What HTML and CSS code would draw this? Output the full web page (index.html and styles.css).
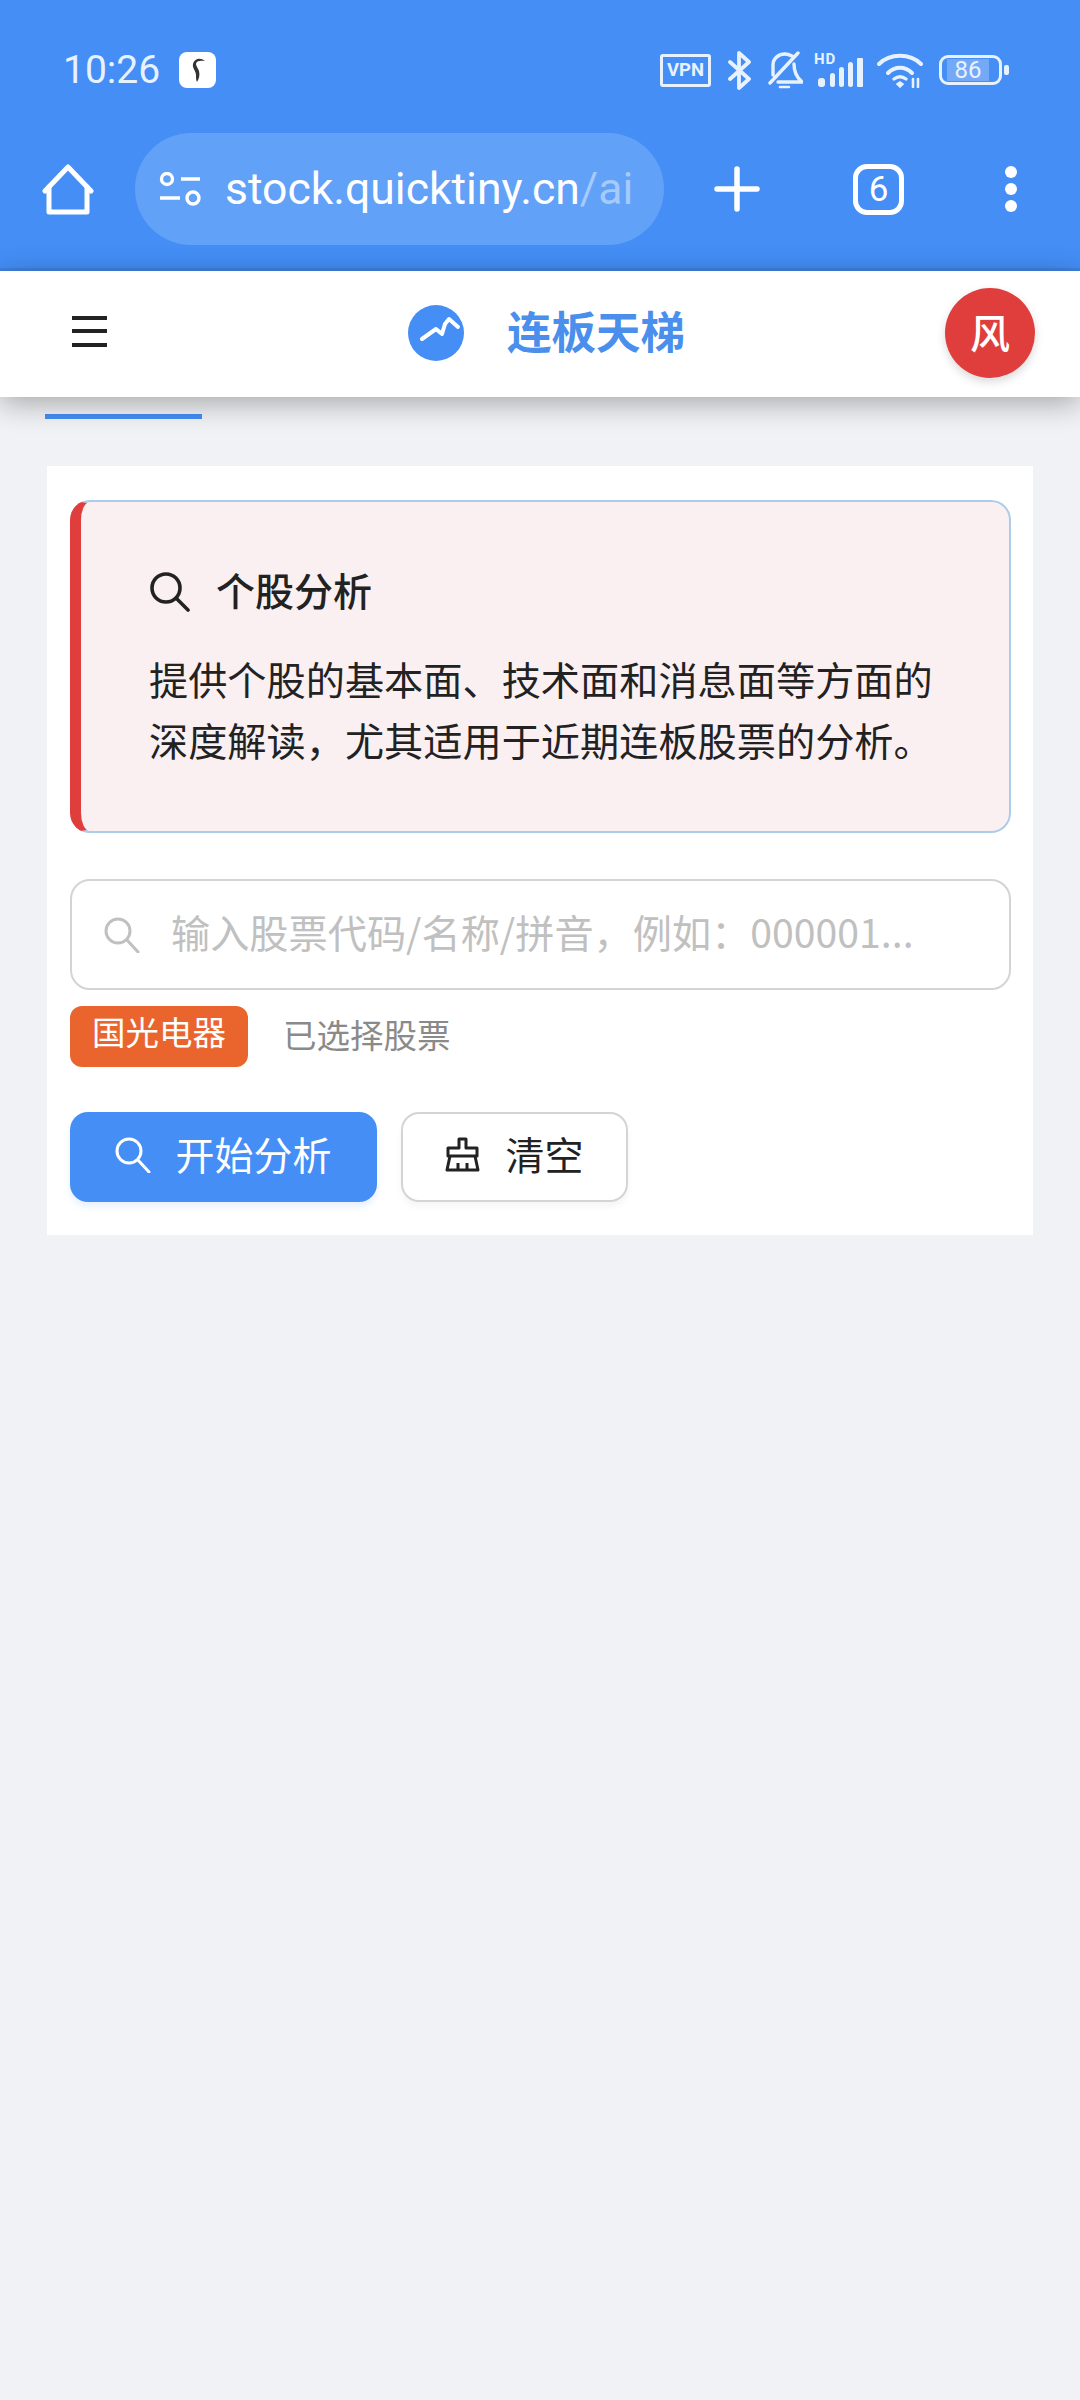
FILE: index.html
```html
<!DOCTYPE html>
<html lang="zh-CN">
<head>
    <meta charset="UTF-8">
    <meta name="viewport" content="width=device-width, initial-scale=1.0">
    <title>连板天梯</title>
    <link rel="stylesheet" href="styles.css">
</head>
<body>

    <div class="browser-top">
        <div class="status-bar">
            <div class="status-left">
                <span class="clock">10:26</span>
                <span class="app-badge">
                    <svg width="16" height="26" viewBox="0 0 16 26"><path d="M15 4C10 0 4 2 3 7c-1 4 3 7 3 11 0 3 0 5 1 7 2-3 3-7 2-11C8 11 6 9 6 7c0-3 4-4 9-3z" fill="#333"/></svg>
                </span>
            </div>
            <div class="status-right">
                <span class="vpn-tag">VPN</span>
                <svg class="st-bt" width="25" height="39" viewBox="0 0 25 39" fill="none" stroke="#e8f2ff" stroke-width="3.8" stroke-linecap="round" stroke-linejoin="round"><path d="M3 11l19 17-10 9V2l10 9L3 28"/></svg>
                <svg class="st-bell" width="36" height="38" viewBox="0 0 36 38" fill="none" stroke="#e8f2ff" stroke-width="3.4" stroke-linecap="round" stroke-linejoin="round"><path d="M31 2L3 32M6 24V14C6 7 12 3 18 3c3 0 5 1 7 2M27 13c0 6 1 12 8 18H11"/><path d="M13 36h9" stroke-width="2.6"/></svg>
                <span class="signal">
                    <span class="hd">HD</span>
                    <svg width="46" height="31" viewBox="0 0 46 31" fill="#e8f2ff"><rect x="0" y="22" width="7" height="9" rx="3"/><rect x="12" y="17" width="5" height="14" rx="2.5"/><rect x="21" y="11" width="5" height="20" rx="2.5"/><rect x="30" y="6" width="5" height="25" rx="2.5"/><rect x="39" y="2" width="6" height="29" rx="1"/></svg>
                </span>
                <svg class="st-wifi" width="46" height="35" viewBox="0 0 46 35" fill="none" stroke="#e8f2ff" stroke-width="4" stroke-linecap="round"><path d="M2 11C13 0 33 0 44 11"/><path d="M11 20c7-7 17-7 24 0"/><path d="M17 26c4-3 8-3 12 0" stroke-width="3.4"/><path d="M20 31l3-2 3 2-3 3z" fill="#e8f2ff" stroke-width="1.6"/><path d="M36 26v8M41 26v8" stroke-width="2.6"/></svg>
                <span class="battery">
                    <span class="battery-body"><span class="battery-level">86</span></span>
                    <span class="battery-tip"></span>
                </span>
            </div>
        </div>

        <div class="toolbar">
            <svg class="home-icon" width="52" height="51" viewBox="0 0 52 51" fill="none" stroke="#fff" stroke-width="5" stroke-linecap="round" stroke-linejoin="round"><path d="M3 27L26 3l23 24"/><path d="M7 23v25h38V23"/></svg>
            <div class="url-bar">
                <svg width="42" height="35" viewBox="0 0 42 35" fill="none" stroke="#fff" stroke-width="3.4"><circle cx="8" cy="7" r="5.5"/><path d="M22 7h19M1 26h20"/><circle cx="34" cy="26" r="6"/></svg>
                <span class="url-text">stock.quicktiny.cn<span class="url-path">/ai</span></span>
            </div>
            <svg class="plus-icon" width="46" height="46" viewBox="0 0 46 46" stroke="#fff" stroke-width="5.5" stroke-linecap="round"><path d="M23 3v40M3 23h40"/></svg>
            <span class="tab-count">6</span>
            <span class="more-dots"><i></i><i></i><i></i></span>
        </div>
    </div>

    <header class="app-header">
        <svg class="menu-icon" width="35" height="31" viewBox="0 0 35 31" fill="#222"><rect y="0" width="35" height="4"/><rect y="13" width="35" height="4"/><rect y="27" width="35" height="4"/></svg>
        <div class="brand">
            <span class="brand-logo">
                <svg width="56" height="56" viewBox="0 0 56 56" fill="none" stroke="#fff" stroke-width="4" stroke-linecap="round" stroke-linejoin="round"><path d="M14 34l14-10 6 5 3-10 4-5 9 8"/></svg>
            </span>
            <span class="brand-name">连板天梯</span>
        </div>
        <span class="avatar">风</span>
    </header>

    <div class="tab-line"></div>

    <main class="panel">
        <section class="intro-card">
            <h2 class="intro-title">
                <svg width="40" height="40" viewBox="0 0 40 40" fill="none" stroke="#222" stroke-width="3.6" stroke-linecap="round"><circle cx="16" cy="16" r="14"/><path d="M26 26l12 12"/></svg>
                <span class="intro-name">个股分析</span>
            </h2>
            <p class="intro-text">提供个股的基本面、技术面和消息面等方面的深度解读，尤其适用于近期连板股票的分析。</p>
        </section>

        <div class="search-box">
            <svg width="36" height="36" viewBox="0 0 36 36" fill="none" stroke="#c0c0c0" stroke-width="3" stroke-linecap="round"><circle cx="14" cy="14" r="12"/><path d="M23 23l11 12"/></svg>
            <span class="search-hint">输入股票代码/名称/拼音，例如：000001...</span>
        </div>

        <div class="picked-row">
            <span class="stock-tag">国光电器</span>
            <span class="picked-label">已选择股票</span>
        </div>

        <div class="actions">
            <button class="btn btn-primary">
                <svg width="36" height="36" viewBox="0 0 36 36" fill="none" stroke="#fff" stroke-width="3" stroke-linecap="round"><circle cx="14" cy="14" r="12"/><path d="M23 23l11 12"/></svg>
                <span class="btn-label">开始分析</span>
            </button>
            <button class="btn btn-plain">
                <!-- broom -->
                <svg width="36" height="36" viewBox="0 0 36 36" fill="none" stroke="#222" stroke-width="3" stroke-linejoin="round"><path d="M14 11V2h7v9h11v8H3v-8z"/><path d="M5 19L2 33h31L30 19M13 26v7M22 26v7"/></svg>
                <span class="btn-label">清空</span>
            </button>
        </div>
    </main>

</body>
</html>
```

FILE: styles.css
```css
* {
    margin: 0;
    padding: 0;
    box-sizing: border-box;
}

body {
    width: 1080px;
    height: 2400px;
    overflow: hidden;
    background: #f0f2f5;
    font-family: "Noto Sans CJK SC", "Noto Sans", sans-serif;
}

/* browser chrome */
.browser-top {
    height: 271px;
    background: #448ef6;
    border-bottom: 3px solid #3f83e2;
}

.status-bar {
    height: 133px;
    padding: 44px 71px 0 63px;
    display: flex;
    justify-content: space-between;
    align-items: flex-start;
}

.status-left {
    display: flex;
    align-items: center;
    gap: 19px;
    height: 52px;
}

.clock {
    font-family: Roboto, sans-serif;
    font-size: 39px;
    color: #e8f2ff;
}

.app-badge {
    width: 37px;
    height: 36px;
    background: #fff;
    border-radius: 8px;
    display: flex;
    align-items: center;
    justify-content: center;
}

.status-right {
    display: flex;
    align-items: center;
    height: 52px;
    color: #e8f2ff;
}

.vpn-tag {
    width: 51px;
    height: 33px;
    border: 3px solid #e8f2ff;
    border-radius: 3px;
    font-family: Roboto, sans-serif;
    font-size: 18.5px;
    font-weight: 700;
    line-height: 27px;
    text-align: center;
}

.st-bt {
    margin-left: 16px;
}

.st-bell {
    margin-left: 15px;
}

.signal {
    position: relative;
    width: 50px;
    height: 33px;
    margin-left: 11px;
    display: flex;
    align-items: flex-end;
    justify-content: flex-end;
}

.hd {
    position: absolute;
    left: 0;
    top: -2px;
    font-family: Roboto, sans-serif;
    font-size: 15px;
    font-weight: 700;
    letter-spacing: 1px;
    line-height: 15px;
}

.st-wifi {
    margin-left: 13px;
}

.battery {
    margin-left: 16px;
    display: flex;
    align-items: center;
    gap: 2px;
}

.battery-body {
    width: 63px;
    height: 30px;
    border: 3px solid #e8f2ff;
    border-radius: 9px;
    padding: 1px 5px;
    display: flex;
}

.battery-level {
    width: 42px;
    background: #74a9f8;
    font-family: Roboto, sans-serif;
    font-size: 24px;
    line-height: 22px;
    text-align: center;
}

.battery-tip {
    width: 5px;
    height: 10px;
    background: #e8f2ff;
    border-radius: 2px;
}

.toolbar {
    height: 135px;
    padding: 0 0 23px 42px;
    display: flex;
    align-items: center;
}

.url-bar {
    width: 529px;
    height: 112px;
    margin-left: 41px;
    padding: 0 0 0 24px;
    background: #61a1f7;
    border-radius: 56px;
    display: flex;
    align-items: center;
    gap: 24px;
}

.url-text {
    font-family: Roboto, sans-serif;
    font-size: 44.5px;
    color: #fff;
    white-space: nowrap;
}

.url-path {
    color: #a5cafb;
}

.plus-icon {
    margin-left: 50px;
}

.tab-count {
    width: 51px;
    height: 51px;
    margin-left: 93px;
    border: 5px solid #fff;
    border-radius: 14px;
    font-family: Roboto, sans-serif;
    font-size: 35px;
    line-height: 41px;
    text-align: center;
    color: #fff;
}

.more-dots {
    margin-left: 101px;
    display: flex;
    flex-direction: column;
    gap: 5px;
}

.more-dots i {
    width: 12px;
    height: 12px;
    background: #fff;
    border-radius: 50%;
}

/* app header */
.app-header {
    position: relative;
    height: 126px;
    padding: 0 45px 2px 72px;
    background: #fff;
    box-shadow: 0 6px 28px rgba(0, 0, 0, 0.32);
    display: flex;
    align-items: center;
}

.menu-icon {
    margin-bottom: 3px;
}

.brand {
    margin-left: 301px;
    display: flex;
    align-items: center;
    gap: 43px;
}

.brand-logo {
    width: 56px;
    height: 56px;
    background: #448ef6;
    border-radius: 50%;
}

.brand-logo svg {
    display: block;
}

.brand-name {
    margin-bottom: 6px;
    font-size: 44.5px;
    font-weight: 700;
    line-height: 56px;
    color: #4a8fec;
}

.avatar {
    width: 90px;
    height: 90px;
    margin-left: auto;
    background: #e03d3d;
    border-radius: 50%;
    box-shadow: 0 4px 10px rgba(0, 0, 0, 0.15);
    font-size: 40px;
    font-weight: 500;
    line-height: 86px;
    text-align: center;
    color: #fff;
}

.tab-line {
    width: 157px;
    height: 5px;
    margin: 17px 0 0 45px;
    background: #448ef6;
}

/* analysis panel */
.panel {
    width: 986px;
    height: 769px;
    margin: 47px 0 0 47px;
    padding: 34px 22px 0 23px;
    background: #fff;
}

.intro-card {
    height: 333px;
    padding: 70px 70px 0 68px;
    background: #faf0f2;
    border: 2px solid #abcdea;
    border-left: 11px solid #e03d3d;
    border-radius: 20px;
}

.intro-title {
    height: 40px;
    display: flex;
    align-items: center;
    gap: 26px;
    font-size: 39px;
    font-weight: 500;
    line-height: 40px;
    color: #222;
}

.intro-title svg {
    margin-left: 1px;
}

.intro-name {
    padding-bottom: 6px;
}

.intro-text {
    margin-top: 36px;
    font-size: 39.2px;
    line-height: 61px;
    color: #222;
}

.search-box {
    height: 111px;
    margin-top: 46px;
    padding: 0 0 0 32px;
    border: 2px solid #d4d4d4;
    border-radius: 20px;
    display: flex;
    align-items: center;
    gap: 31px;
}

.search-hint {
    padding-bottom: 8px;
    font-size: 39.2px;
    color: #c0c0c0;
    white-space: nowrap;
}

.picked-row {
    margin-top: 16px;
    display: flex;
    align-items: center;
    gap: 35px;
}

.stock-tag {
    width: 178px;
    height: 61px;
    background: #ea652d;
    border-radius: 12px;
    font-size: 33.5px;
    line-height: 50px;
    text-align: center;
    color: #fff;
}

.picked-label {
    padding-bottom: 6px;
    font-size: 33.5px;
    color: #8a8a8a;
}

.actions {
    margin-top: 45px;
    display: flex;
    gap: 24px;
}

.btn {
    height: 90px;
    padding-bottom: 4px;
    border-radius: 18px;
    font-family: inherit;
    font-size: 39px;
    display: flex;
    align-items: center;
    justify-content: center;
    gap: 24px;
}

.btn-label {
    padding-bottom: 4px;
}

.btn-primary {
    width: 307px;
    border: none;
    background: #448ef6;
    color: #fff;
    box-shadow: 0 5px 6px rgba(68, 142, 246, 0.12);
}

.btn-plain {
    width: 227px;
    border: 2px solid #d4d4d4;
    background: #fff;
    color: #222;
    box-shadow: 0 5px 6px rgba(0, 0, 0, 0.04);
}
```
